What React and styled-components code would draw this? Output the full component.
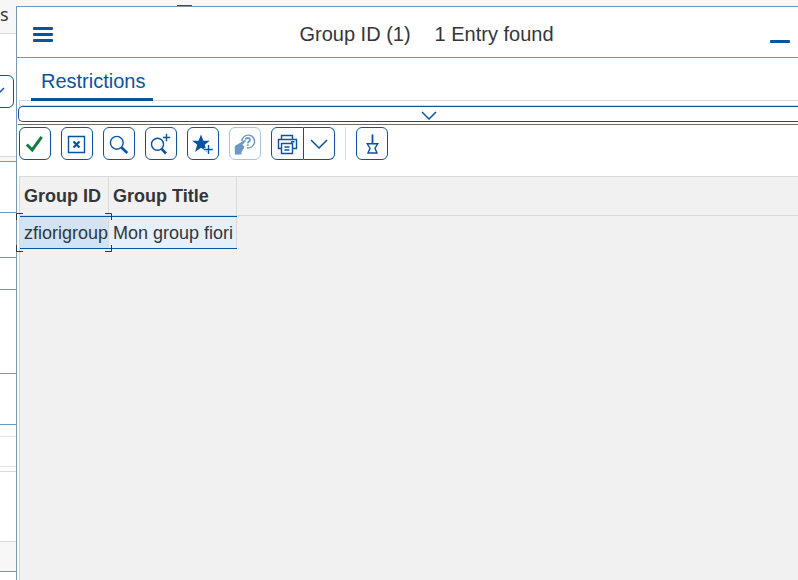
import React from "react";
import styled, { createGlobalStyle } from "styled-components";

const BLUE = "#0854a0";
const EDGE = "#7596b5";
const LINE = "#d9d9d9";
const INK = "#32363a";

const GlobalStyle = createGlobalStyle`
  *, *::before, *::after { box-sizing: border-box; }
  body { margin: 0; background: #fff; color: ${INK}; font-family: "Liberation Sans", Arial, sans-serif; }
  button { font: inherit; padding: 0; cursor: pointer; }
`;

const Screen = styled.div`
  display: grid;
  grid-template-columns: 16px minmax(0, 1fr);
  height: 100vh;
  overflow: hidden;
`;

const Backdrop = styled.aside`
  display: flex;
  flex-direction: column;
  overflow: hidden;
`;

const Band = styled.div`
  flex: none;
  height: ${(p) => p.$height}px;
  background: ${(p) => (p.$shaded ? "#f7f7f7" : "#fff")};
  border-bottom: 1px solid ${(p) => p.$line || LINE};
`;

const BackTitle = styled(Band)`
  display: flex;
  align-items: center;
  font-family: "Noto Sans", sans-serif;
  font-size: 18px;
  line-height: 20px;
  padding-bottom: 6px;
`;

const FieldBand = styled(Band)`
  display: flex;
  justify-content: flex-end;
  align-items: flex-start;
  padding: 41px 2px 0 0;
`;

const FieldButton = styled.button`
  flex: none;
  display: flex;
  align-items: center;
  justify-content: flex-end;
  width: 32px;
  height: 33px;
  padding-right: 8px;
  color: ${BLUE};
  background: #fff;
  border: 1px solid ${BLUE};
  border-radius: 6px;
`;

const Main = styled.div`
  display: flex;
  flex-direction: column;
  min-width: 0;
`;

const TopStrip = styled.div`
  flex: none;
  display: flex;
  align-items: flex-end;
  height: 6px;
  padding-left: 161px;
  background: #f7f7f7;
`;

const TopMark = styled.div`
  width: 15px;
  height: 1px;
  background: ${BLUE};
`;

const Dialog = styled.section`
  flex: 1;
  display: flex;
  flex-direction: column;
  min-height: 0;
  background: #fff;
  border-top: 1px solid ${EDGE};
  border-left: 1px solid ${EDGE};
`;

const TitleBar = styled.header`
  flex: none;
  display: grid;
  grid-template-columns: 40px 1fr 36px;
  align-items: center;
  height: 51px;
  padding: 0 0 0 6px;
  border-bottom: 1px solid ${EDGE};
`;

const PlainButton = styled.button`
  display: flex;
  align-items: center;
  justify-content: center;
  height: 40px;
  margin-top: 4px;
  color: ${BLUE};
  background: transparent;
  border: 0;
`;

const Title = styled.h1`
  display: flex;
  justify-content: center;
  gap: 24px;
  margin: 0;
  padding: 4px 0 0 28px;
  font-size: 20px;
  line-height: 24px;
  font-weight: 400;
  white-space: nowrap;
`;

const Tabs = styled.nav`
  flex: none;
  display: flex;
  position: relative;
  z-index: 1;
  height: 43px;
  padding-left: 14px;
`;

const Tab = styled.button`
  padding: 5px 8px 0 10px;
  color: ${BLUE};
  background: transparent;
  border: 0;
  border-bottom: 3px solid ${BLUE};
  font-size: 20px;
  line-height: 24px;
`;

const TabPanel = styled.div`
  flex: none;
  height: 6px;
  margin: -1px 0 0 2px;
  border: solid ${LINE};
  border-width: 1px 0 1px 1px;
`;

const Splitter = styled.button`
  flex: none;
  display: flex;
  align-items: center;
  justify-content: center;
  height: 16px;
  margin: 0 0 2px 1px;
  padding: 2px 0 0 40px;
  color: ${BLUE};
  background: #fff;
  border: solid ${BLUE};
  border-width: 1px 0 1px 1px;
  border-radius: 5px 0 0 5px;
`;

const Toolbar = styled.div`
  flex: none;
  display: flex;
  gap: 10px;
  height: 52px;
  margin-left: 1px;
  padding: 2px 0 0 1px;
  border-top: 1px solid #6a6d70;
`;

const ToolButton = styled.button`
  display: flex;
  align-items: center;
  justify-content: center;
  width: 32px;
  height: 33px;
  color: ${(p) => (p.$accept ? "#107e3e" : BLUE)};
  background: #fff;
  border: 1px solid ${BLUE};
  border-radius: 6px;

  &:disabled { color: #6b98c6; border-color: #a9c4de; }
`;

const SplitButton = styled.div`
  display: flex;

  ${ToolButton}:first-child { width: 33px; border-radius: 6px 0 0 6px; }
  ${ToolButton}:last-child { border-left: 0; width: 31px; border-radius: 0 6px 6px 0; }
`;

const Divider = styled.div`
  width: 1px;
  height: 33px;
  background: ${LINE};
`;

const TableArea = styled.div`
  flex: 1;
  min-height: 0;
  margin-left: 2px;
  background: #f1f1f1;
  border: solid ${LINE};
  border-width: 1px 0 0 1px;
`;

const Table = styled.table`
  width: 100%;
  table-layout: fixed;
  border-collapse: separate;
  border-spacing: 0;
`;

const Column = styled.col`
  width: ${(p) => p.$width};
`;

const HeadCell = styled.th`
  height: 39px;
  padding: 0 0 0 4px;
  text-align: left;
  font-size: 18px;
  line-height: 22px;
  border-right: 1px solid ${LINE};
  border-bottom: 1px solid ${LINE};
  white-space: nowrap;

  &:last-child { border-right: 0; }
`;

const Cell = styled.td`
  position: relative;
  height: 33px;
  padding: 0 0 0 4px;
  font-size: 18px;
  line-height: 22px;
  background: ${(p) => (p.$selected ? "#d1e3f5" : "#e5f0fa")};
  border: solid ${BLUE};
  border-width: 1px 0;
  box-shadow: inset -1px 0 ${LINE};
  white-space: nowrap;
`;

const Focus = styled.svg`
  position: absolute;
  top: -4px;
  left: -4px;
  width: calc(100% + 7px);
  height: calc(100% + 8px);
  overflow: visible;
  pointer-events: none;
  z-index: 1;
`;

const Chevron = ({ w = 18, h = 10 }) => (
  <svg width={w} height={h} viewBox={`0 0 ${w} ${h}`} fill="none" stroke="currentColor" strokeWidth="1.5">
    <path d={`M1 1 L${w / 2} ${h - 1} L${w - 1} 1`} />
  </svg>
);

const Icon = ({ children }) => (
  <svg width="24" height="24" viewBox="0 0 24 24" fill="none" stroke="currentColor" strokeWidth="1.4">
    {children}
  </svg>
);

const tools = [
  {
    label: "Accept",
    accept: true,
    art: <path d="M3.8 12.5L9.2 18L18.7 4.8" strokeWidth="3" />,
  },
  {
    label: "Close",
    art: (
      <>
        <path d="M3.5 4.5H19.5V20.5H3.5Z" />
        <path d="M8.5 9.5L14.5 15.5M14.5 9.5L8.5 15.5" strokeWidth="2.2" />
      </>
    ),
  },
  {
    label: "Find",
    art: (
      <>
        <circle cx="9.8" cy="10.8" r="6.4" />
        <path d="M14.5 15.5L20.3 21" strokeWidth="2.6" />
      </>
    ),
  },
  {
    label: "Find next",
    art: (
      <>
        <circle cx="8.5" cy="12.3" r="6" />
        <path d="M12.6 16.8L17 21.5" strokeWidth="2.6" />
        <path d="M17.5 1.8V9.2M13.8 5.5H21.2" />
      </>
    ),
  },
  {
    label: "Add to favourites",
    art: (
      <>
        <path
          d="M10 2.5L12.4 8.8H18.8L13.8 12.8L15.8 20L10 15.8L4 20L6.2 12.8L1.2 8.8H7.6Z"
          fill="currentColor"
          stroke="none"
        />
        <path d="M12.8 17.5H17.5V13.2" stroke="#fff" strokeWidth="3" />
        <path d="M13 17.5H21.8M17.5 13V22" />
      </>
    ),
  },
  {
    label: "Help",
    disabled: true,
    art: (
      <>
        <path d="M8.8 9.2A6.4 6.4 0 1 1 14 15.8" />
        <path d="M12.5 7.7C12.8 5.4 17.2 5.4 17 8C16.9 9.6 14.8 9.4 14.8 11.2M14.8 12.2V13.7" strokeWidth="1.8" />
        <path d="M1.8 14L6 11.5L12.2 7.8L13 9L9.2 13L11.5 14.5L10 17.8L8.5 20V22.5H1.8Z" fill="currentColor" stroke="none" />
      </>
    ),
  },
];

export default function App() {
  return (
    <>
      <GlobalStyle />
      <Screen>
        <Backdrop>
          <BackTitle $height={34} $shaded>s</BackTitle>
          <FieldBand $height={123}>
            <FieldButton aria-label="Open list"><Chevron w={16} h={9} /></FieldButton>
          </FieldBand>
          <Band $height={5} $shaded $line={EDGE} />
          <Band $height={51} $line={EDGE} />
          <Band $height={45} $line="#89919a" />
          <Band $height={32} $line="#89919a" />
          <Band $height={84} $line="#89919a" />
          <Band $height={51} $line="#6c9abf" />
          <Band $height={12} $line="#e5e5e5" />
          <Band $height={30} $line="#e5e5e5" />
          <Band $height={5} />
          <Band $height={70} />
          <Band $height={30} $shaded $line="#89919a" />
        </Backdrop>
        <Main>
          <TopStrip><TopMark /></TopStrip>
          <Dialog role="dialog" aria-labelledby="dialog-title">
            <TitleBar>
              <PlainButton aria-label="Menu">
                <svg width="20" height="15" viewBox="0 0 20 15" fill="currentColor">
                  <rect width="20" height="3" rx="1" />
                  <rect y="6" width="20" height="3" rx="1" />
                  <rect y="12" width="20" height="3" rx="1" />
                </svg>
              </PlainButton>
              <Title id="dialog-title">
                <span>Group ID (1)</span>
                <span>1 Entry found</span>
              </Title>
              <PlainButton aria-label="Minimize">
                <svg width="20" height="18" viewBox="0 0 20 18" fill="currentColor">
                  <rect y="15" width="20" height="3" rx="1" />
                </svg>
              </PlainButton>
            </TitleBar>
            <Tabs><Tab>Restrictions</Tab></Tabs>
            <TabPanel />
            <Splitter aria-label="Expand restrictions"><Chevron w={16} h={9} /></Splitter>
            <Toolbar role="toolbar">
              {tools.map((t) => (
                <ToolButton key={t.label} aria-label={t.label} disabled={t.disabled} $accept={t.accept}>
                  <Icon>{t.art}</Icon>
                </ToolButton>
              ))}
              <SplitButton>
                <ToolButton aria-label="Print">
                  <Icon>
                    <path d="M5.5 7.5V3.5H16.5V7.5M5.5 16.5H2.5V7.5H20.5V16.5H16.5" />
                    <path d="M5.5 11.5H16.5V21.5H5.5ZM8.5 15H13.5M8.5 18H13.5M15 9.8H18.5" />
                  </Icon>
                </ToolButton>
                <ToolButton aria-label="Print options"><Chevron /></ToolButton>
              </SplitButton>
              <Divider />
              <ToolButton aria-label="Pin">
                <Icon>
                  <path d="M12.5 2.5V12" strokeWidth="1.8" />
                  <path d="M7.2 11.8H17.8L15 16.2L17 21H8L10 16.2Z" />
                </Icon>
              </ToolButton>
            </Toolbar>
            <TableArea>
              <Table>
                <colgroup>
                  <Column $width="89px" />
                  <Column $width="128px" />
                  <Column $width="auto" />
                </colgroup>
                <thead>
                  <tr>
                    <HeadCell>Group ID</HeadCell>
                    <HeadCell>Group Title</HeadCell>
                    <HeadCell as="td" />
                  </tr>
                </thead>
                <tbody>
                  <tr>
                    <Cell $selected>
                      zfiorigroup
                      <Focus aria-hidden="true" fill="none" stroke={INK} viewBox="0 0 96 39" preserveAspectRatio="none">
                        <path d="M.5 7V.5H7M89 .5H95.5V7M95.5 32V38.5H89M7 38.5H.5V32" />
                      </Focus>
                    </Cell>
                    <Cell>Mon group fiori</Cell>
                  </tr>
                </tbody>
              </Table>
            </TableArea>
          </Dialog>
        </Main>
      </Screen>
    </>
  );
}
